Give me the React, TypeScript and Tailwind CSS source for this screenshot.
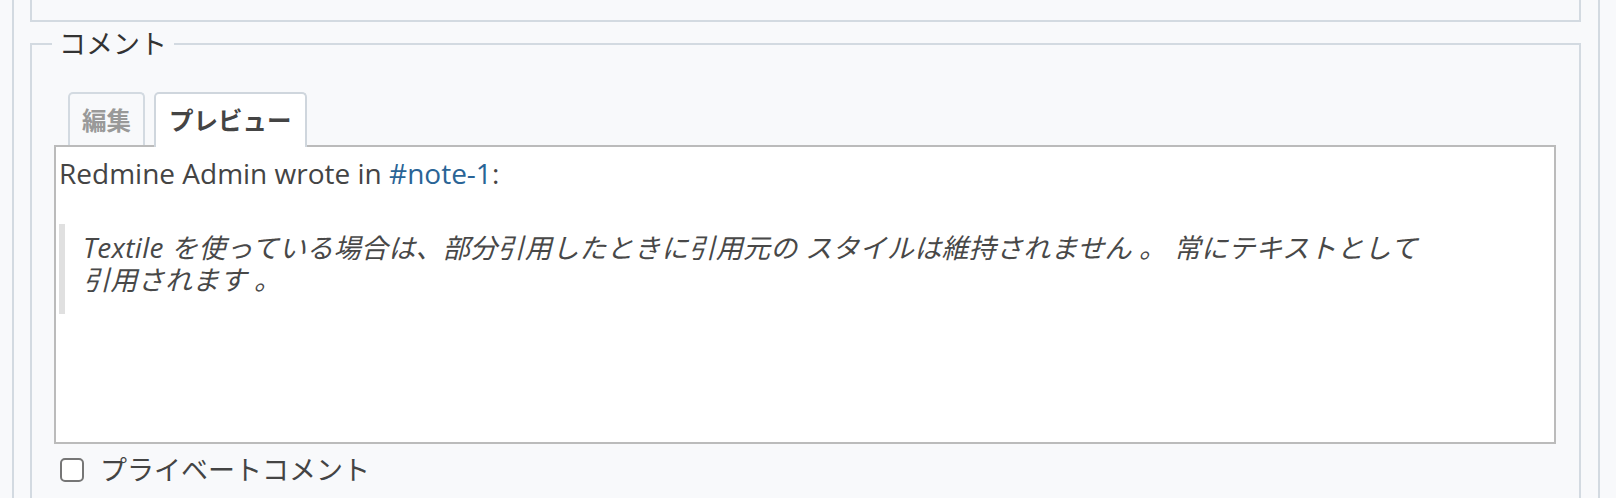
import React from 'react';

const font = "font-['Open_Sans','Noto_Sans_CJK_JP',sans-serif]";

function Tabs() {
  return (
    <div className="flex items-end gap-[9px] ml-[14px] h-[53px]">
      <div className="h-[53px] flex items-center px-[12px] pt-[4px] border-2 border-b-0 border-[#d3dae1] rounded-t-[5px] bg-[#f8f9fb] text-[24.5px] font-bold text-[#999]">
        編集
      </div>
      <div className="relative z-10 h-[55px] -mb-[2px] flex items-center px-[13px] pb-[2px] pt-[4px] border-2 border-b-0 border-[#cfd6dd] rounded-t-[5px] bg-white text-[24.5px] font-bold text-[#444]">
        プレビュー
      </div>
    </div>
  );
}

function Preview() {
  return (
    <div className="relative z-0 h-[299px] border-2 border-[#bbbbbb] bg-white px-[3px] pt-[10px] text-[27px] leading-[32px] text-[#444]">
      <p className="text-[28px]">
        Redmine Admin wrote in <a href="#note-1" className="text-[#2a6496]">#note-1</a>:
      </p>
      <blockquote className="mt-[35px] border-l-[6px] border-[#e0e0e0] pl-[18px] pt-[7px] pb-[18px] italic text-[#484848] tracking-[0.3px]">
        <span className="text-[28px]">Textile</span> を使っている場合は、部分引用したときに引用元の スタイルは維持されません 。 常にテキストとして
        <br />
        引用されます 。
      </blockquote>
    </div>
  );
}

export default function App() {
  return (
    <div className={`${font} h-[498px] overflow-hidden bg-[#f8f9fb]`}>
      <div className="ml-[12px] w-[1588px] h-[498px] border-x-2 border-[#d3dae1] pl-[16px] pr-[17px]">
        <div className="h-[22px] border-x-2 border-b-2 border-[#d3dae1]" />
        <fieldset className="mt-[6px] border-2 border-[#d3dae1] pl-[22px] pr-[23px] pt-[32px] min-h-[600px]">
          <legend className="-ml-[2px] px-[7px] text-[27px] leading-[32px] text-[#333]">コメント</legend>
          <Tabs />
          <Preview />
          <label className="mt-[10px] ml-[6px] flex items-center gap-[16px] h-[32px] text-[27px] leading-[32px] text-[#444]">
            <span className="w-[24px] h-[24px] rounded-[5px] border-2 border-[#767676] bg-white" />
            プライベートコメント
          </label>
        </fieldset>
      </div>
    </div>
  );
}
